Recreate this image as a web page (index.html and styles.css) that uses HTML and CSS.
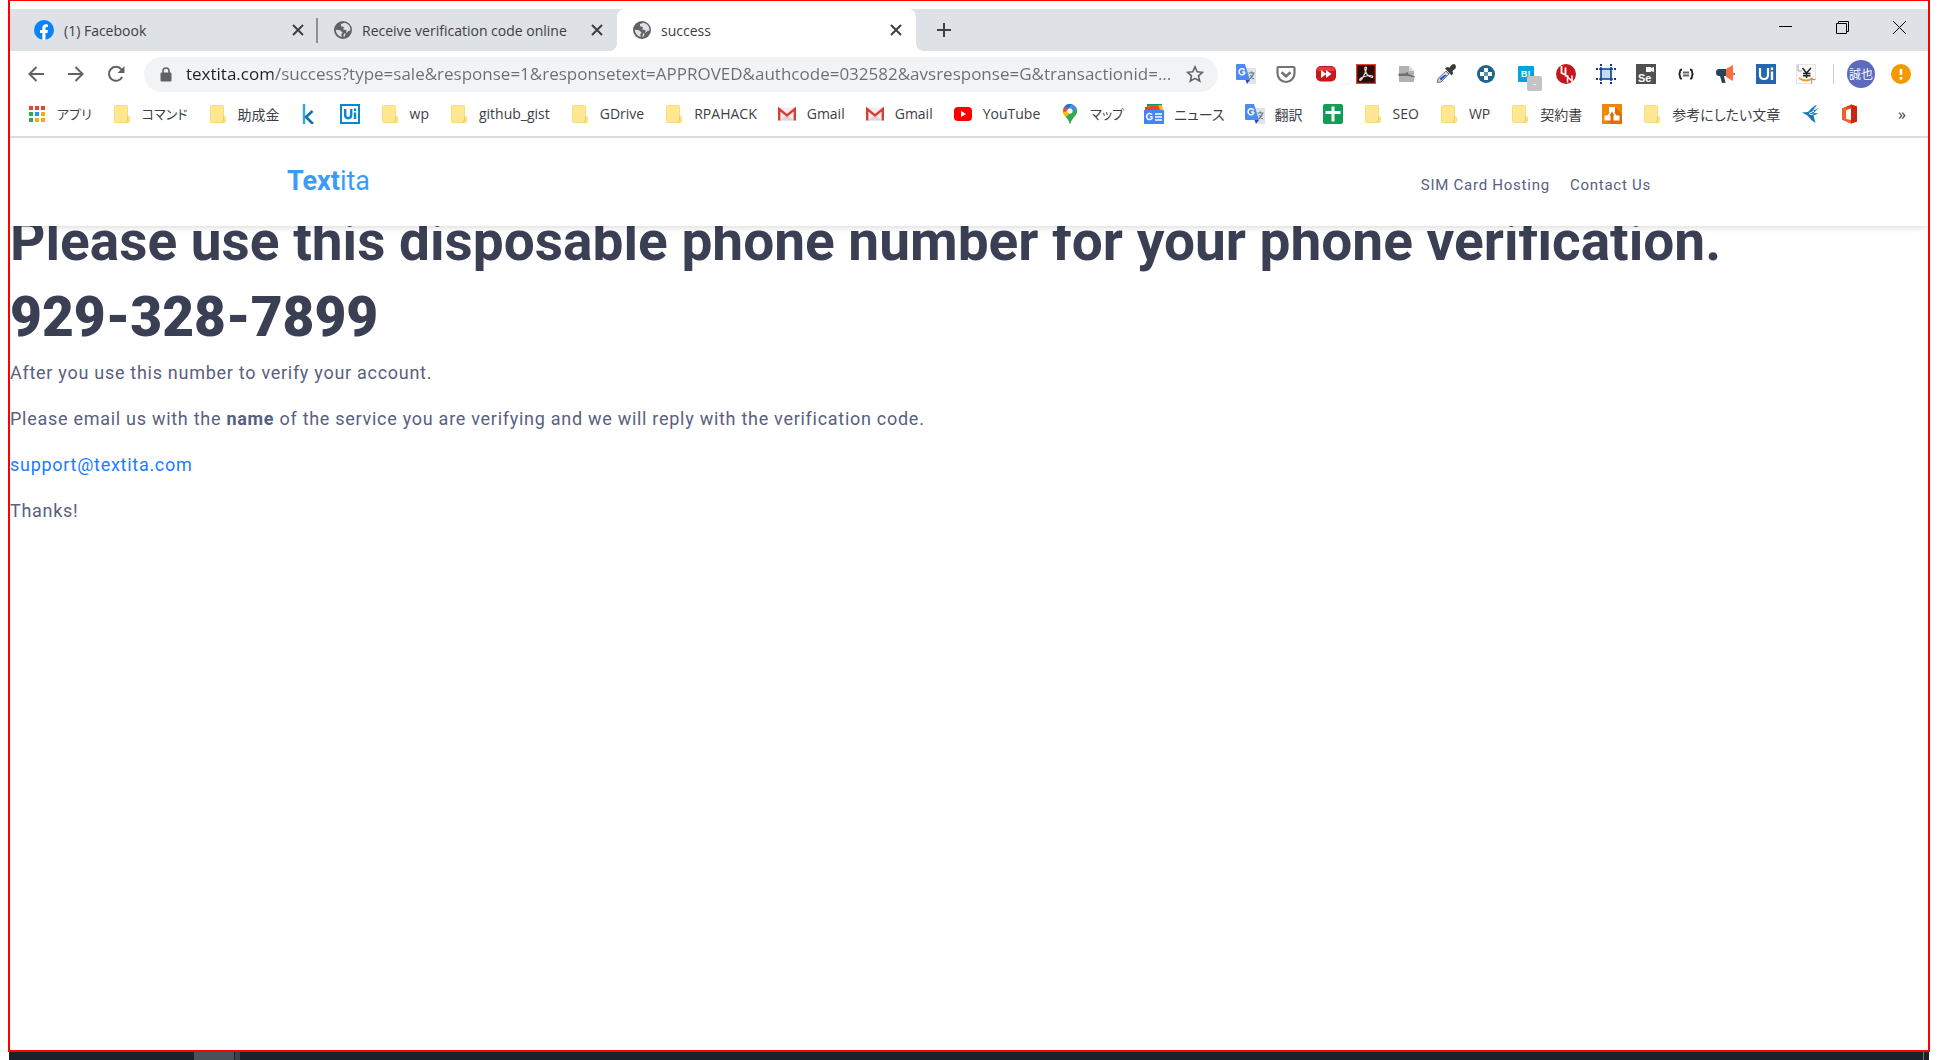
FILE: index.html
```html
<!DOCTYPE html>
<html lang="ja">
<head>
<meta charset="utf-8">
<meta name="viewport" content="width=device-width, initial-scale=1">
<title>success</title>
<link rel="stylesheet" href="styles.css">
</head>
<body>
<svg class="defs" aria-hidden="true">
  <symbol id="folder" viewBox="0 0 20 20"><path d="M3.500 1.500h11q1 0 1 1v10q2-.5 2 1v3.500q0 1.500-1.500 1.500h-12.500q-1 0-1-1v-15q0-1 1-1z" fill="#ffe793" stroke="#f8dc78"/><path d="M15.500 12.500v4q-1.500 0-1.500 2" fill="none" stroke="#efc956"/></symbol>
  <symbol id="translate" viewBox="0 0 20 20"><path d="M9 4h10.500q.5 0 .5.500v15q0 .5-.5.500H13z" fill="#e1e3e6"/><path d="M0 1q0-1 1-1h8l5 16H1q-1 0-1-1z" fill="#4c8bf5"/><path d="M9.500 16h4.500l-3 4z" fill="#2a46c0"/><path d="M12.500 9h6M15.500 7.500V9M13.500 15q3.500-2 4-6M14.500 11q1 3 3.500 4" fill="none" stroke="#607d8b" stroke-width="1.200"/><path d="M8.800 8H6.200M8.600 6.300A3 3 0 1 0 9 8.200" fill="none" stroke="#fff" stroke-width="1.500"/></symbol>
  <symbol id="globe" viewBox="0 0 18 18"><circle cx="9" cy="9" r="9" fill="#5f6368"/><path d="M10.500 1.800 7 3v2.200l3 .8-.8 2.600 3.200.5v3.200l2.200-2.600h1.700q.4-4.500-2.800-6.600zM1.800 8.800l4.200.4 2.600 2.200-1.400 1.800.6 2.800Q2 14.400 1.800 8.800zM9.800 12.400l2 .2-1.300 3.200-1 .2z" fill="#dee1e6"/></symbol>
  <symbol id="cross" viewBox="0 0 12 12"><path d="M1 1l10 10M11 1 1 11" stroke="#3c4043" stroke-width="2" fill="none"/></symbol>
  <symbol id="gmail" viewBox="0 0 20 20"><path d="M1 3.500h18v13H1z" fill="#eee"/><path d="M3 16.500l7-6 7 6z" fill="#d8d8d8"/><path d="M2.200 16.500V5L10 11.500 17.800 5v11.500" fill="none" stroke="#d93f35" stroke-width="2.400"/></symbol>
</svg>
<div class="window">
  <header class="tabs">
    <div class="tab tab-first">
      <svg class="fav20" viewBox="0 0 20 20"><circle cx="10" cy="10" r="10" fill="#0b82f8"/><path d="M8.300 20v-7H6v-3h2.300V8Q8.300 4.200 12 4.200q1 0 2 .2V7h-1.200Q11.500 7 11.500 8.300V10h2.400l-.4 3h-2v7z" fill="#fff"/></svg>
      <span class="tab-title">(1) Facebook</span>
      <button class="tab-close" aria-label="Close tab"><svg><use href="#cross"/></svg></button>
    </div>
    <div class="tab">
      <svg class="fav18"><use href="#globe"/></svg>
      <span class="tab-title">Receive verification code online</span>
      <button class="tab-close" aria-label="Close tab"><svg><use href="#cross"/></svg></button>
    </div>
    <div class="tab tab-active">
      <svg class="fav18"><use href="#globe"/></svg>
      <span class="tab-title">success</span>
      <button class="tab-close" aria-label="Close tab"><svg><use href="#cross"/></svg></button>
    </div>
    <button class="new-tab" aria-label="New tab"><svg width="16" height="16" viewBox="0 0 16 16"><path d="M8 1v14M1 8h14" stroke="#3c4043" stroke-width="2"/></svg></button>
    <div class="controls">
      <button aria-label="Minimize"><svg width="13" height="13" viewBox="0 0 13 13"><path d="M0 5.500h13" stroke="#000"/></svg></button>
      <button aria-label="Restore"><svg width="13" height="13" viewBox="0 0 13 13"><path d="M.5 2.500h10v10H.5zM2.500 2V.5h10v10H11" fill="none" stroke="#000"/></svg></button>
      <button aria-label="Close window"><svg width="13" height="13" viewBox="0 0 13 13"><path d="M0 0l13 13M13 0 0 13" stroke="#000"/></svg></button>
    </div>
  </header>

  <div class="toolbar">
    <button class="tool" aria-label="Back"><svg width="16" height="16" viewBox="0 0 16 16"><path d="M16 8H1.500M8.500 1 1.500 8l7 7" fill="none" stroke="#5f6368" stroke-width="2"/></svg></button>
    <button class="tool" aria-label="Forward"><svg width="16" height="16" viewBox="0 0 16 16"><path d="M0 8h14.500M7.500 1l7 7-7 7" fill="none" stroke="#5f6368" stroke-width="2"/></svg></button>
    <button class="tool" aria-label="Reload"><svg width="18" height="18" viewBox="0 0 18 18"><path d="M15.200 12A7 7 0 1 1 14.500 4.500" fill="none" stroke="#5f6368" stroke-width="2"/><path d="M17.500 1v7h-7z" fill="#5f6368"/></svg></button>
    <div class="omnibox">
      <svg width="12" height="15" viewBox="0 0 12 15"><path d="M3 6V4a3 3 0 0 1 6 0v2" fill="none" stroke="#5f6368" stroke-width="1.600"/><rect x=".5" y="5.500" width="11" height="9" rx="1.300" fill="#5f6368"/></svg>
      <input class="url" type="text" aria-label="Address" value="textita.com/success?type=sale&amp;response=1&amp;responsetext=APPROVED&amp;authcode=032582&amp;avsresponse=G&amp;transactionid=...">
      <button class="star" aria-label="Bookmark this page"><svg width="18" height="18" viewBox="0 0 18 18"><path d="M9 1.800l2.200 5 5.300.5-4 3.600 1.200 5.300L9 13.400l-4.700 2.800 1.200-5.300-4-3.600 5.300-.5z" fill="none" stroke="#5f6368" stroke-width="1.600"/></svg></button>
    </div>
    <div class="extensions">
      <button class="tool" aria-label="Translate"><svg class="ic"><use href="#translate"/></svg></button>
      <button class="tool" aria-label="Pocket"><svg class="ic" viewBox="0 0 20 20"><path d="M2.500 3h15q1 0 1 1v5.500a8.500 8.500 0 0 1-17 0V4q0-1 1-1z" fill="none" stroke="#737373" stroke-width="2.200"/><path d="M5.500 8.200 10 12.300l4.500-4.100" fill="none" stroke="#737373" stroke-width="2.600"/></svg></button>
      <button class="tool" aria-label="Fast forward"><svg class="ic" viewBox="0 0 20 20"><rect y="2" width="20" height="15.500" rx="5" fill="#c9151c"/><path d="M1 7q0-4 4-4h10q4 0 4 4z" fill="#e8383c"/><path d="M5 6l5.500 4L5 14zM10 6l5.500 4-5.500 4z" fill="#fff"/></svg></button>
      <button class="tool" aria-label="Acrobat"><svg class="ic" viewBox="0 0 20 20"><path d="M.5.500h19v19H.5z" fill="#2b0d0b" stroke="#e8402a" stroke-width="1.500"/><path d="M9.500 3q-1.500 1 0 4.500 1 3 4 5 3 1.500 3.300.3.200-1.500-3.800-1.300-4 .3-7 2-3 1.700-2.200 2.700 1.200.7 3.200-3 2.500-4.500 3.500-8.500.2-1.700-1-1.700z" fill="none" stroke="#ddd" stroke-width="1.200"/></svg></button>
      <button class="tool" aria-label="Page tool"><svg class="ic" viewBox="0 0 20 20"><path d="M3 2h10l5 5v11H3z" fill="#b2b2b2"/><path d="M13 2v5h5z" fill="#ddd"/><path d="M2.500 9.500h6l3-1.500 1 2 6.500 2.500v1l-7-1.500H2.500z" fill="#6f6f6f"/></svg></button>
      <button class="tool" aria-label="Color picker"><svg class="ic" viewBox="0 0 20 20"><path d="M1 18.500l1-4 8-7.500 3 3-8 8z" fill="#c5d3f2" stroke="#777"/><path d="M3.500 14.500l5-3.500h2.500l-6 5.500z" fill="#2854ce"/><path d="M9 4.500l2-1.500 2.500.5 2.500-3 2.500-.5 1.500 2-.5 2.500-3 2.500.5 2.500-1.500 2z" fill="#3b3b3d"/></svg></button>
      <button class="tool" aria-label="Controls"><svg class="ic" viewBox="0 0 20 20"><circle cx="10" cy="10" r="9" fill="#20638e"/><path d="M8 4h4v4h4v4h-4v4H8v-4H4V8h4z" fill="#fff"/><path d="M8 8h4v4H8z" fill="#5b93b2"/></svg></button>
      <button class="tool badge-host" aria-label="Hatena bookmark"><svg class="ic" viewBox="0 0 20 20"><rect x="2" y="2" width="16" height="16" rx="1" fill="#00a5de"/><text x="5" y="13" font-family="Liberation Sans" font-weight="700" font-size="9" fill="#fff">B!</text></svg><span class="badge">-</span></button>
      <button class="tool" aria-label="LN"><svg class="ic" viewBox="0 0 20 20"><circle cx="10" cy="10" r="10" fill="#c5161d"/><path d="M5.500 2v7l3 1.500M9.500 3.500v8l3 1" fill="none" stroke="#fff" stroke-width="1.800"/><path d="M11.500 18.500v-5.500l4.500 4v-5.500" fill="none" stroke="#fff" stroke-width="1.500"/></svg></button>
      <button class="tool" aria-label="Frame"><svg class="ic" viewBox="0 0 20 20"><path d="M5 5h10v10H5z" fill="#c3dbfb"/><path d="M5 3v14M15 3v14M3 5h14M3 15h14" stroke="#123b8b" stroke-width="1.600"/><path d="M5 0v2M15 0v2M5 18v2M15 18v2M0 5h2M0 15h2M18 5h2M18 15h2" stroke="#123b8b" stroke-width="2"/></svg></button>
      <button class="tool" aria-label="Selenium"><svg class="ic" viewBox="0 0 20 20"><path d="M0 0h20v20H0z" fill="#505050"/><path d="M10 3h5v1l3-1v5l-3-1v1h-5z" fill="#fff"/><text x="2" y="18" font-family="Liberation Sans" font-weight="700" font-size="11" fill="#fff">Se</text></svg></button>
      <button class="tool" aria-label="JSON"><svg class="ic" viewBox="0 0 20 20"><path d="M6 5.500q-2 0-2 2 0 2.500-1.500 2.500Q4 10 4 12.500t2 2M14 5.500q2 0 2 2 0 2.500 1.500 2.500-1.500 0-1.500 2.500t-2 2" fill="none" stroke="#222" stroke-width="1.800"/><path d="M7 8.500h6M7 11.500h6" stroke="#666" stroke-width="2"/></svg></button>
      <button class="tool" aria-label="Megaphone"><svg class="ic" viewBox="0 0 20 20"><path d="M10 5H3Q0 5 0 8.500T3 12h1l2 7h3.500L8 12h2z" fill="#294358"/><path d="M10 5l7-4v16l-7-4z" fill="#ff6d3f"/><path d="M17.500 8.500q3 1.300 0 3z" fill="#294358"/></svg></button>
      <button class="tool" aria-label="UiPath"><svg class="ic" viewBox="0 0 20 20"><path d="M0 0h20v20H0z" fill="#2467b1"/><path d="M4 4v7q0 4 4 4t4-4V4" fill="none" stroke="#fff" stroke-width="2.200"/><path d="M16 7.500V16M16 3.500v2.500" stroke="#fff" stroke-width="2.400"/></svg></button>
      <button class="tool" aria-label="Yen price"><svg class="ic" viewBox="0 0 20 20"><path d="M.5.500h19v15l-4 4H.5z" fill="#fafafa" stroke="#e4e4e4"/><path d="M6.500 4 10.500 9l4.500-5M10.500 9v5M7 9.500h7.500M7 11.800h7.500" fill="none" stroke="#222" stroke-width="1.500"/><path d="M2 1v6h4" fill="none" stroke="#aaa"/><path d="M3 14q7 5 14 0" fill="none" stroke="#f19a2b" stroke-width="1.800"/><path d="M15.500 19.500v-4h4" fill="none" stroke="#999"/></svg></button>
    </div>
    <span class="divider"></span>
    <button class="avatar" aria-label="Profile">誠也</button>
    <button class="alert" aria-label="Update available"><svg width="20" height="20" viewBox="0 0 20 20"><circle cx="10" cy="10" r="10" fill="#f29900"/><path d="M10 5v6M10 13v2.500" stroke="#fff" stroke-width="2.600"/></svg></button>
  </div>

  <nav class="bookmarks" aria-label="Bookmarks">
    <a href="#" class="bm kana"><svg class="ic" viewBox="0 0 20 20"><path d="M2 2h4v4H2zM8 2h4v4H8zM14 2h4v4h-4z" fill="#ea4335"/><path d="M2 8h4v4H2zM2 14h4v4H2z" fill="#34a853"/><path d="M8 8h4v4H8z" fill="#2196f3"/><path d="M14 8h4v4h-4zM8 14h4v4H8zM14 14h4v4h-4z" fill="#fbab05"/></svg>アプリ</a>
    <a href="#" class="bm kana"><svg class="ic"><use href="#folder"/></svg>コマンド</a>
    <a href="#" class="bm"><svg class="ic"><use href="#folder"/></svg>助成金</a>
    <a href="#" class="bm" aria-label="Kintone"><svg class="ic" viewBox="0 0 20 20"><path d="M4 0v20" stroke="#35a7d6" stroke-width="2.400"/><path d="M12.500 7 6 13l7 7" fill="none" stroke="#166fa5" stroke-width="2.600"/></svg></a>
    <a href="#" class="bm" aria-label="UiPath"><svg class="ic" viewBox="0 0 20 20"><path d="M1 1h18v18H1z" fill="#fff" stroke="#0b87cf" stroke-width="2"/><path d="M5.200 5v6q0 3.200 3 3.200t3-3.200V5M15 8.500V15M15 4.500v2.500" fill="none" stroke="#0b87cf" stroke-width="2.400"/></svg></a>
    <a href="#" class="bm"><svg class="ic"><use href="#folder"/></svg>wp</a>
    <a href="#" class="bm"><svg class="ic"><use href="#folder"/></svg>github_gist</a>
    <a href="#" class="bm"><svg class="ic"><use href="#folder"/></svg>GDrive</a>
    <a href="#" class="bm"><svg class="ic"><use href="#folder"/></svg>RPAHACK</a>
    <a href="#" class="bm"><svg class="ic"><use href="#gmail"/></svg>Gmail</a>
    <a href="#" class="bm"><svg class="ic"><use href="#gmail"/></svg>Gmail</a>
    <a href="#" class="bm"><svg class="ic" viewBox="0 0 20 20"><rect x="1" y="3" width="18" height="14" rx="4" fill="#f00"/><path d="M8 7l5 3-5 3z" fill="#fff"/></svg>YouTube</a>
    <a href="#" class="bm kana"><svg class="ic" viewBox="0 0 20 20"><path d="M10 0a7 7 0 0 0-7 7q0 3 3.500 6.500Q9 16.500 10 20q1-3.500 3.500-6.500Q17 10 17 7a7 7 0 0 0-7-7z" fill="#34a853"/><path d="M4.500 2.600A7 7 0 0 0 3.200 9q.5 1.500 1.800 3.200L12 4.500z" fill="#fbbc04"/><path d="M4.500 2.600A7 7 0 0 0 3.300 8L8 7z" fill="#ea4335"/><path d="M4.500 2.600A7 7 0 0 1 12.300.4L8 6z" fill="#1a73e8"/><path d="M12.300.4A7 7 0 0 1 16.300 4L6 13Q4 10.500 3.800 10z" fill="#fbbc04"/><path d="M12.300.4A7 7 0 0 1 16.300 4l-4.600 5L10 4z" fill="#4285f4"/><path d="M17 7q0 3-3.500 6.500Q11 16.500 10 20q-.8-3.800-4-7L16.300 4q.7 1.500.7 3z" fill="#34a853"/><circle cx="10" cy="7" r="2.600" fill="#fff"/></svg>マップ</a>
    <a href="#" class="bm"><svg class="ic" viewBox="0 0 20 20"><path d="M3 0h15v5H3z" fill="#0c9d58"/><path d="M4 2l14-1 1 5H3z" fill="#fbbc04"/><path d="M1 3l13-2 2 5H1z" fill="#ea4335"/><path d="M0 6h20v14H0z" fill="#4285f4"/><path d="M8.500 12.800H5.800M8 10.700a3 3 0 1 0 .4 3M11 10h7M11 13h7M11 16h7" fill="none" stroke="#fff" stroke-width="1.600"/></svg>ニュース</a>
    <a href="#" class="bm"><svg class="ic"><use href="#translate"/></svg>翻訳</a>
    <a href="#" class="bm" aria-label="Sheets"><svg class="ic" viewBox="0 0 20 20"><rect width="20" height="20" rx="2" fill="#0f9d58"/><path d="M10 2.500v15M2.500 8.500h15" stroke="#fff" stroke-width="3"/></svg></a>
    <a href="#" class="bm"><svg class="ic"><use href="#folder"/></svg>SEO</a>
    <a href="#" class="bm"><svg class="ic"><use href="#folder"/></svg>WP</a>
    <a href="#" class="bm"><svg class="ic"><use href="#folder"/></svg>契約書</a>
    <a href="#" class="bm" aria-label="Diagrams"><svg class="ic" viewBox="0 0 20 20"><path d="M0 0h20v20H0z" fill="#f08705"/><path d="M13 3l7 7v10H9l-6-4z" fill="#df6c0c"/><path d="M10 6 5 14M10 6l5 8" stroke="#fff" stroke-width="1.600"/><path d="M7 3h6v5H7zM2.500 11.500h6v5h-6zM11.500 11.500h6v5h-6z" fill="#fff"/></svg></a>
    <a href="#" class="bm"><svg class="ic"><use href="#folder"/></svg>参考にしたい文章</a>
    <a href="#" class="bm" aria-label="Bird"><svg class="ic" viewBox="0 0 20 20"><path d="M2 8.500 8 8q3-4 8-7l.5.500-4 5.500 6-3-5 5 5 .5-5 2 2 7.500q-5-3-8-7.500z" fill="#1478be"/><path d="M9 9.500 14 7M9.500 10.500l4-.3" stroke="#fff"/></svg></a>
    <a href="#" class="bm" aria-label="Office"><svg class="ic" viewBox="0 0 20 20"><path d="M2 4.500 11 .5l6 2v15l-6 2-9-4z" fill="#e5451c"/><path d="M11 .5l6 2v15l-6 2z" fill="#c9260f"/><path d="M2 4.500 6 3v12l5 1v3.500l-9-4z" fill="#f0602a"/><path d="M6 6l5-1.500V16l-5-1z" fill="#fff"/></svg></a>
    <button class="more" aria-label="More bookmarks">»</button>
  </nav>

  <div class="page">
    <header class="site-header">
      <div class="site-bar">
        <a href="#" class="logo"><b>Text</b>ita</a>
        <nav class="site-nav"><a href="#">SIM Card Hosting</a><a href="#">Contact Us</a></nav>
      </div>
    </header>
    <main class="content">
      <h1>Please use this disposable phone number for your phone verification.</h1>
      <h1 class="number">929-328-7899</h1>
      <p>After you use this number to verify your account.</p>
      <p>Please email us with the <b>name</b> of the service you are verifying and we will reply with the verification code.</p>
      <p><a href="mailto:support@textita.com">support@textita.com</a></p>
      <p>Thanks!</p>
    </main>
  </div>
</div>
<footer class="taskbar"><span class="task"></span><span class="task-more"></span><span class="desktop-edge"></span></footer>
</body>
</html>
```
FILE: styles.css
```css
* { box-sizing: border-box; }
body {
  margin: 0;
  min-height: 100vh;
  display: flex;
  flex-direction: column;
  background: #fff;
  font-family: "Open Sans", "Noto Sans CJK JP", sans-serif;
  font-size: 14px;
  font-feature-settings: "palt";
  color: #3c4043;
}
button { border: 0; padding: 0; background: none; font: inherit; color: inherit; display: flex; align-items: center; justify-content: center; }
a { color: inherit; text-decoration: none; }
svg { display: block; flex: none; }
.defs { position: absolute; width: 0; height: 0; }
.ic { width: 20px; height: 20px; }
.fav20 { width: 20px; height: 20px; }
.fav18 { width: 18px; height: 18px; }

.window {
  flex: 1;
  display: flex;
  flex-direction: column;
  margin: 0 8px;
  padding-top: 8px;
  border: 2px solid #f00;
  border-top-width: 1px;
}

/* tab strip */
.tabs { display: flex; height: 42px; padding-left: 8px; background: #dee1e6; }
.tab { display: flex; align-items: center; width: 299px; padding: 0 12px 0 16px; }
.tab-first { width: 300px; position: relative; }
.tab-first::after { content: ""; position: absolute; right: 0; top: 9px; width: 2px; height: 25px; background: #8c8f94; }
.tab-title { flex: 1; padding-left: 10px; white-space: nowrap; }
.tab-close { width: 16px; height: 16px; }
.tab-close svg { width: 12px; height: 12px; }
.tab-active { position: relative; background: #fff; border-radius: 8px 8px 0 0; }
.tab-active::before, .tab-active::after { content: ""; position: absolute; bottom: 0; width: 8px; height: 8px; }
.tab-active::before { left: -8px; background: radial-gradient(circle at 0 0, transparent 8px, #fff 8px); }
.tab-active::after { right: -8px; background: radial-gradient(circle at 100% 0, transparent 8px, #fff 8px); }
.new-tab { width: 56px; }
.controls { margin-left: auto; display: flex; }
.controls button { width: 57px; height: 37px; }

/* toolbar */
.toolbar { display: flex; align-items: center; height: 46px; padding: 0 17px 0 6px; }
.tool { width: 40px; height: 40px; }
.omnibox { flex: 1; display: flex; align-items: center; height: 35px; margin: 0 8px; padding: 0 14px 0 16px; border-radius: 18px; background: #f1f3f4; }
.url {
  flex: 1;
  min-width: 0;
  margin-left: 14px;
  padding: 0 0 2px;
  border: 0;
  outline: 0;
  font: 17px "Open Sans", sans-serif;
  color: transparent;
  background: linear-gradient(90deg, #202124 87px, #6a6d71 87px);
  -webkit-background-clip: text;
  background-clip: text;
}
.extensions { display: flex; }
.badge-host { position: relative; }
.badge { position: absolute; right: 4px; bottom: 3px; width: 15px; height: 15px; border-radius: 2px; background: #c4c4c4; color: #fff; font-size: 10px; line-height: 15px; }
.divider { width: 1px; height: 20px; margin: 0 13px 0 7px; background: #ccc; }
.avatar { width: 28px; height: 28px; border-radius: 50%; background: #5c6bc0; color: #fff; font-size: 12px; }
.alert { margin-left: 16px; }

/* bookmarks bar */
.bookmarks { display: flex; align-items: center; height: 41px; padding: 0 22px 6px 17px; gap: 20px; border-bottom: 2px solid #dadce0; }
.bm { display: flex; align-items: center; gap: 10px; height: 20px; white-space: nowrap; }
.kana { font-size: 13px; }
.more { margin-left: auto; font-size: 16px; }

/* web page */
.page { flex: 1; overflow: hidden; font-family: Roboto, sans-serif; font-feature-settings: normal; color: #596080; }
.site-header { position: relative; z-index: 1; background: #fff; box-shadow: 0 0 8px rgba(0, 0, 0, .2); }
.site-bar { display: flex; align-items: center; justify-content: space-between; height: 88px; padding-bottom: 2px; max-width: 1364px; margin: 0 auto; }
.logo { font-size: 27px; color: #3c9cf3; }
.site-nav { display: flex; gap: 20px; padding-top: 8px; font-size: 15px; letter-spacing: .05em; }
.content { font-size: 18px; letter-spacing: .04em; }
h1 { margin: 0; font-size: 55px; line-height: 76px; font-weight: 700; letter-spacing: 0; color: #3b3f53; }
.content h1:first-child { margin-top: -23px; }
.content .number { margin-bottom: 3px; font-weight: 900; }
p { margin: 0 0 16px; line-height: 30px; }
p a { color: #1b7cff; }

/* taskbar */
.taskbar { display: flex; height: 8px; margin: 0 9px; padding-left: 185px; background: #1a212b; }
.task { width: 40px; background: #4b5158; }
.task-more { width: 5px; margin-left: 1px; background: #3c424a; }
.desktop-edge { width: 1px; margin: 0 5px 0 auto; background: #6f7780; }
```
